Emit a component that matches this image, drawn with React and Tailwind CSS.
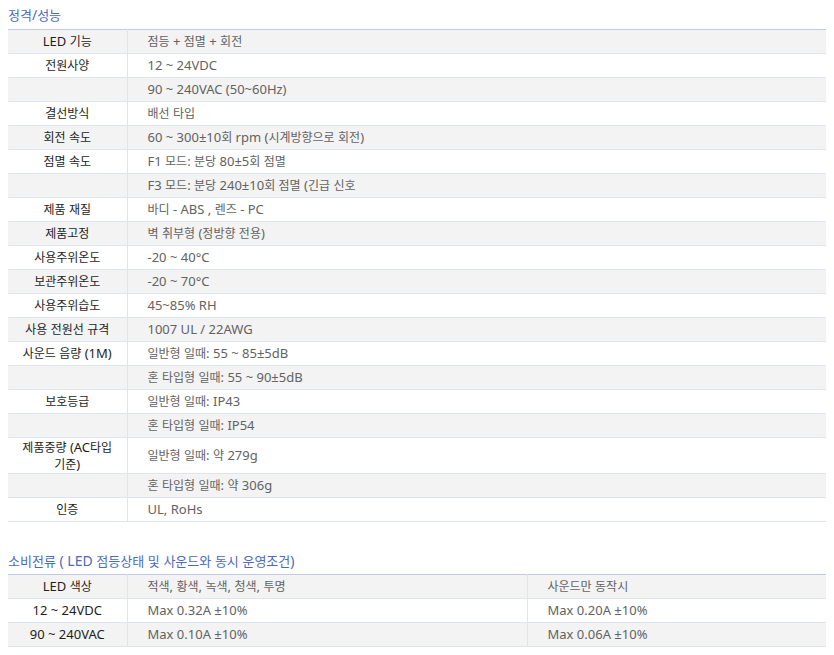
import React from "react";

const specs = [
  ["LED 기능", "점등 + 점멸 + 회전"],
  ["전원사양", "12 ~ 24VDC"],
  ["", "90 ~ 240VAC (50~60Hz)"],
  ["결선방식", "배선 타입"],
  ["회전 속도", "60 ~ 300±10회 rpm (시계방향으로 회전)"],
  ["점멸 속도", "F1 모드: 분당 80±5회 점멸"],
  ["", "F3 모드: 분당 240±10회 점멸 (긴급 신호"],
  ["제품 재질", "바디 - ABS , 렌즈 - PC"],
  ["제품고정", "벽 취부형 (정방향 전용)"],
  ["사용주위온도", "-20 ~ 40°C"],
  ["보관주위온도", "-20 ~ 70°C"],
  ["사용주위습도", "45~85% RH"],
  ["사용 전원선 규격", "1007 UL / 22AWG"],
  ["사운드 음량 (1M)", "일반형 일때: 55 ~ 85±5dB"],
  ["", "혼 타입형 일때: 55 ~ 90±5dB"],
  ["보호등급", "일반형 일때: IP43"],
  ["", "혼 타입형 일때: IP54"],
  ["WEIGHT", "일반형 일때: 약 279g"],
  ["", "혼 타입형 일때: 약 306g"],
  ["인증", "UL, RoHs"],
];

const current = [
  ["LED 색상", "적색, 황색, 녹색, 청색, 투명", "사운드만 동작시"],
  ["12 ~ 24VDC", "Max 0.32A ±10%", "Max 0.20A ±10%"],
  ["90 ~ 240VAC", "Max 0.10A ±10%", "Max 0.06A ±10%"],
];

const font = {
  fontFamily: '"Noto Sans", "Noto Sans CJK KR", sans-serif',
};

function T({ s }) {
  const parts = s.split(/([가-힣]+)/);
  return (
    <>
      {parts.map((p, i) =>
        p === "" ? null : /[가-힣]/.test(p) ? (
          <span key={i} className="text-[12px]">{p}</span>
        ) : (
          <span key={i} className="text-[13px]">{p}</span>
        )
      )}
    </>
  );
}

function H({ s }) {
  const parts = s.split(/([가-힣]+)/);
  return (
    <>
      {parts.map((p, i) =>
        p === "" ? null : /[가-힣]/.test(p) ? (
          <span key={i} className="text-[13px]">{p}</span>
        ) : (
          <span key={i} className="text-[14px]">{p}</span>
        )
      )}
    </>
  );
}

export default function App() {
  return (
    <div className="w-[834px] h-[655px] bg-white px-2 pt-[6px] text-[12px]" style={font}>
      <h2 className="leading-[18px] h-[23px] text-[#4a6bc0] font-normal">
        <H s="정격/성능" />
      </h2>
      <table className="w-[818px] border-collapse border-t border-[#c3c9e8] table-fixed">
        <colgroup>
          <col className="w-[119px]" />
          <col />
        </colgroup>
        <tbody>
          {specs.map(([k, v], i) => {
            const bg = i % 2 === 0 ? "bg-[#f3f3f3]" : "bg-white";
            const tall = k === "WEIGHT";
            return (
              <tr key={i} className={`${bg} border-b border-[#dfe3f2] ${tall ? "h-[36px]" : "h-[24px]"}`}>
                <td className="border-r border-[#dfe3f2] text-center text-[#1e1e1e] font-normal leading-[16px] px-1 p-0">
                  {tall ? (
                    <>
                      <T s="제품중량 (AC타입" />
                      <br />
                      <T s="기준)" />
                    </>
                  ) : (
                    <T s={k} />
                  )}
                </td>
                <td className="pl-5 text-[#626262] leading-[16px] p-0">
                  <T s={v} />
                </td>
              </tr>
            );
          })}
        </tbody>
      </table>

      <h2 className="mt-[30px] leading-[18px] h-[22px] text-[#4a6bc0] font-normal">
        <H s="소비전류 ( LED 점등상태 및 사운드와 동시 운영조건)" />
      </h2>
      <table className="w-[818px] border-collapse border-t border-[#c3c9e8] table-fixed">
        <colgroup>
          <col className="w-[119px]" />
          <col className="w-[400px]" />
          <col />
        </colgroup>
        <tbody>
          {current.map(([a, b, c], i) => {
            const bg = i % 2 === 0 ? "bg-[#f3f3f3]" : "bg-white";
            return (
              <tr key={i} className={`${bg} border-b border-[#dfe3f2] h-[24px]`}>
                <td className="border-r border-[#dfe3f2] text-center text-[#1e1e1e] font-normal leading-[16px] p-0">
                  <T s={a} />
                </td>
                <td className="border-r border-[#dfe3f2] pl-5 text-[#626262] leading-[16px] p-0">
                  <T s={b} />
                </td>
                <td className="pl-5 text-[#626262] leading-[16px] p-0">
                  <T s={c} />
                </td>
              </tr>
            );
          })}
        </tbody>
      </table>
    </div>
  );
}
